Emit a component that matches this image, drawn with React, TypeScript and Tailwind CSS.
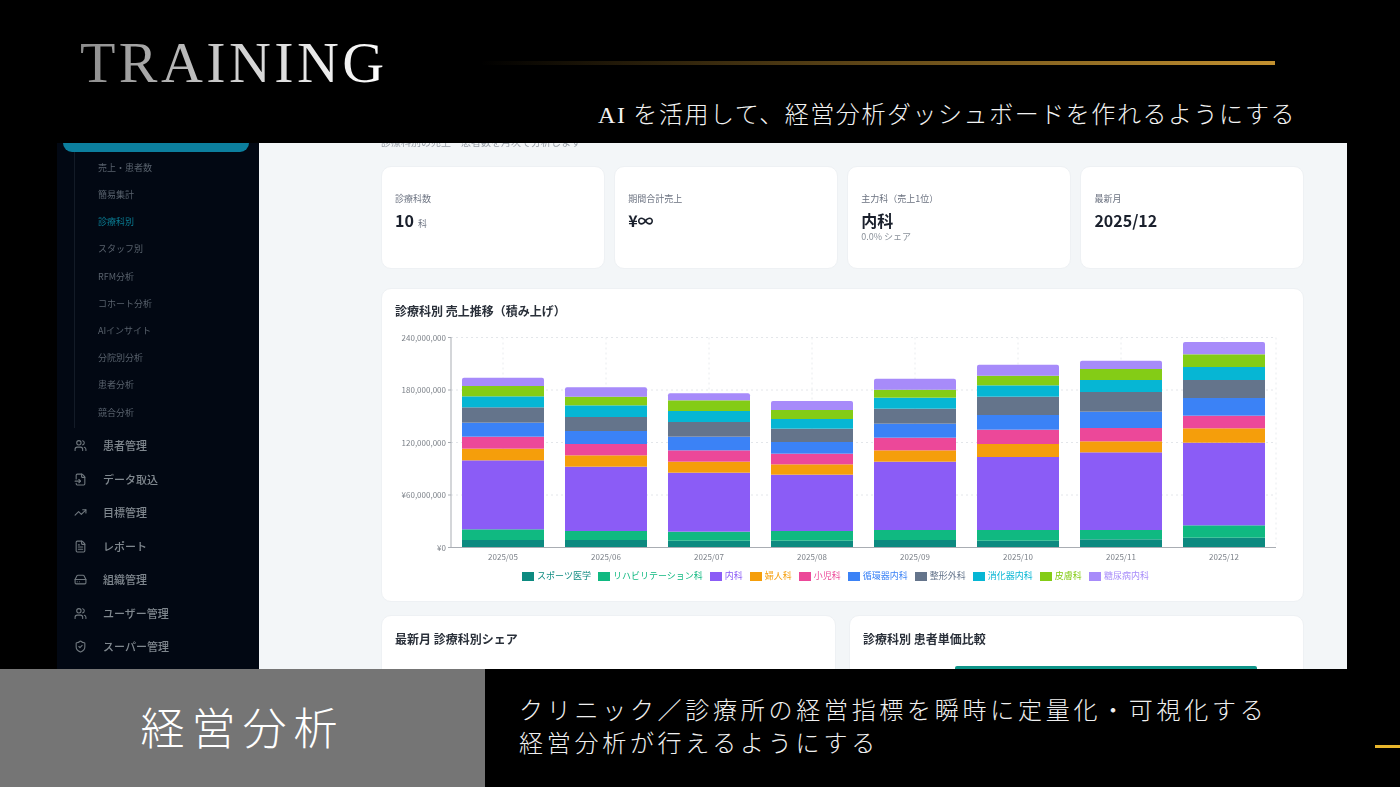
import { FileInput, FileText, HardDrive, ShieldCheck, TrendingUp, Users } from "lucide-react";

const jp = "font-['Noto_Sans_CJK_JP','Noto_Sans',sans-serif]";

const subItems = ["売上・患者数", "簡易集計", "診療科別", "スタッフ別", "RFM分析", "コホート分析", "AIインサイト", "分院別分析", "患者分析", "競合分析"];

const mainItems = [
  { label: "患者管理", icon: Users },
  { label: "データ取込", icon: FileInput },
  { label: "目標管理", icon: TrendingUp },
  { label: "レポート", icon: FileText },
  { label: "組織管理", icon: HardDrive },
  { label: "ユーザー管理", icon: Users },
  { label: "スーパー管理", icon: ShieldCheck },
];

const series = [
  { name: "スポーツ医学", color: "#0d8a80", text: "text-[#0d8a80]" },
  { name: "リハビリテーション科", color: "#10b981", text: "text-[#10b981]" },
  { name: "内科", color: "#8b5cf6", text: "text-[#8b5cf6]" },
  { name: "婦人科", color: "#f59e0b", text: "text-[#f59e0b]" },
  { name: "小児科", color: "#ec4899", text: "text-[#ec4899]" },
  { name: "循環器内科", color: "#3b82f6", text: "text-[#3b82f6]" },
  { name: "整形外科", color: "#64748b", text: "text-[#64748b]" },
  { name: "消化器内科", color: "#06b6d4", text: "text-[#06b6d4]" },
  { name: "皮膚科", color: "#84cc16", text: "text-[#84cc16]" },
  { name: "糖尿病内科", color: "#a78bfa", text: "text-[#a78bfa]" },
];

// segment edges read off the reference, bottom to top, page y
const bars = [
  { month: "2025/05", x: 461, edges: [772, 750, 718, 511, 476, 440, 398, 352, 319, 288, 263] },
  { month: "2025/06", x: 564, edges: [772, 750, 723, 530, 496, 462, 423, 381, 346, 320, 292] },
  { month: "2025/07", x: 667, edges: [772, 752, 725, 548, 515, 481, 440, 396, 363, 331, 310] },
  { month: "2025/08", x: 770, edges: [772, 752, 723, 554, 523, 491, 456, 416, 387, 360, 333] },
  { month: "2025/09", x: 873, edges: [772, 750, 720, 515, 481, 443, 401, 356, 323, 299, 266] },
  { month: "2025/10", x: 976, edges: [772, 752, 720, 501, 462, 419, 375, 320, 286, 257, 224] },
  { month: "2025/11", x: 1079, edges: [772, 748, 720, 487, 454, 414, 365, 306, 270, 237, 212] },
  { month: "2025/12", x: 1182, edges: [772, 743, 706, 458, 415, 377, 324, 270, 231, 193, 156] },
];

const toY = (edge: number) => 290 + edge / 3;

const ticks = [
  { y: 337.5, label: "240,000,000" },
  { y: 390, label: "180,000,000" },
  { y: 442.5, label: "120,000,000" },
  { y: 495, label: "¥60,000,000" },
  { y: 547.5, label: "¥0" },
];

function Sidebar() {
  return (
    <aside className={`w-[202px] shrink-0 bg-[#020813] overflow-hidden ${jp}`}>
      <div className="ml-[6px] w-[186px] h-[9px] rounded-b-[10px] bg-[#0c7f9e]" />
      <div className="ml-[17px] border-l border-[#131b27] pl-[23px] pt-[2px] pb-[2px]">
        {subItems.map((item) => (
          <div key={item} className={`h-[27.2px] flex items-center text-[9px] ${item === "診療科別" ? "text-[#0a7d94]" : "text-[#59626d]"}`}>
            {item}
          </div>
        ))}
      </div>
      <div className="pl-[17px] pt-[1px]">
        {mainItems.map(({ label, icon: Icon }) => (
          <div key={label} className="h-[33.5px] flex items-center gap-[16px] text-[11px] font-medium text-[#80888f]">
            <Icon size={13} strokeWidth={2} className="text-[#70787f]" />
            <span>{label}</span>
          </div>
        ))}
      </div>
    </aside>
  );
}

function StatCard({ label, value, unit, note }: { label: string; value: string; unit?: string; note?: string }) {
  return (
    <div className="h-[103px] rounded-[10px] bg-white border border-[#eef1f4] pl-[13px] pt-[26px]">
      <p className="text-[9px] leading-[12px] text-[#6b7280]">{label}</p>
      <p className="mt-[3px] text-[16px] leading-[24px] font-bold text-[#1a202c]">
        {value}
        {unit && <span className="ml-[4px] text-[9px] font-normal text-[#6b7280]">{unit}</span>}
      </p>
      {note && <p className="text-[9px] leading-[10px] text-[#8b929b]">{note}</p>}
    </div>
  );
}

function StackedChart() {
  return (
    <svg viewBox="381 328 923 236" className="block w-[923px] h-[236px]">
      {ticks.slice(0, 4).map((t) => (
        <line key={t.y} x1={450} x2={1275} y1={t.y} y2={t.y} stroke="#e3e6ea" strokeWidth={1} strokeDasharray="2 3" />
      ))}
      {bars.map((b) => (
        <line key={b.month} x1={b.x + 41} x2={b.x + 41} y1={337.5} y2={547.5} stroke="#e9ecef" strokeWidth={1} strokeDasharray="2 3" />
      ))}
      <line x1={1275} x2={1275} y1={337.5} y2={547.5} stroke="#e9ecef" strokeWidth={1} strokeDasharray="2 3" />
      {bars.map((b) =>
        series.map((s, i) => {
          const bottom = toY(b.edges[i]);
          const top = toY(b.edges[i + 1]);
          if (i === series.length - 1) {
            return (
              <path
                key={s.name}
                d={`M${b.x} ${bottom}V${top + 2}Q${b.x} ${top} ${b.x + 2} ${top}H${b.x + 80}Q${b.x + 82} ${top} ${b.x + 82} ${top + 2}V${bottom}Z`}
                fill={s.color}
              />
            );
          }
          return <rect key={s.name} x={b.x} y={top} width={82} height={bottom - top} fill={s.color} />;
        })
      )}
      <line x1={450} x2={450} y1={337} y2={548} stroke="#a9adb3" strokeWidth={1} />
      <line x1={447} x2={1275} y1={547.5} y2={547.5} stroke="#a9adb3" strokeWidth={1} />
      {ticks.map((t) => (
        <g key={t.label}>
          <line x1={447} x2={450} y1={t.y} y2={t.y} stroke="#a9adb3" strokeWidth={1} />
          <text x={445} y={t.y + 3} textAnchor="end" fontSize={8} fill="#7b8088">
            {t.label}
          </text>
        </g>
      ))}
      {bars.map((b) => (
        <text key={b.month} x={b.x + 41} y={560} textAnchor="middle" fontSize={8} fill="#7b8088">
          {b.month}
        </text>
      ))}
    </svg>
  );
}

function Dashboard() {
  return (
    <main className={`flex-1 bg-[#f3f6f8] overflow-hidden pl-[122px] pr-[43px] ${jp}`}>
      <p className="-mt-[8px] h-[14px] text-[10px] leading-[14px] text-[#9aa1a9]">診療科別の売上・患者数を月次で分析します</p>
      <div className="mt-[17px] grid grid-cols-4 gap-[9.5px]">
        <StatCard label="診療科数" value="10" unit="科" />
        <StatCard label="期間合計売上" value="¥∞" />
        <StatCard label="主力科（売上1位）" value="内科" note="0.0% シェア" />
        <StatCard label="最新月" value="2025/12" />
      </div>
      <section className="mt-[19px] h-[314px] rounded-[10px] bg-white border border-[#eef1f4]">
        <h3 className="pl-[13px] pt-[14px] h-[39px] text-[12px] leading-[16px] font-bold text-[#2a303a]">診療科別 売上推移（積み上げ）</h3>
        <StackedChart />
        <div className="mt-[6px] flex justify-center gap-[7px] pr-[14px]">
          {series.map((s) => (
            <div key={s.name} className={`flex items-center gap-[3px] text-[9px] leading-[12px] ${s.text}`}>
              <svg width="12" height="9" className="shrink-0">
                <rect width="12" height="9" fill={s.color} />
              </svg>
              <span>{s.name}</span>
            </div>
          ))}
        </div>
      </section>
      <div className="mt-[13px] grid grid-cols-2 gap-[13px]">
        <section className="h-[120px] rounded-[10px] bg-white border border-[#eef1f4] pl-[13px] pt-[15px]">
          <h3 className="text-[12px] leading-[16px] font-bold text-[#2a303a]">最新月 診療科別シェア</h3>
        </section>
        <section className="h-[120px] rounded-[10px] bg-white border border-[#eef1f4] pl-[13px] pt-[15px]">
          <h3 className="text-[12px] leading-[16px] font-bold text-[#2a303a]">診療科別 患者単価比較</h3>
          <div className="mt-[19px] ml-[92px] w-[302px] h-[20px] rounded-t-[2px] bg-[#0d9488]" />
        </section>
      </div>
    </main>
  );
}

export default function App() {
  return (
    <div className="w-[1400px] h-[787px] bg-black overflow-hidden flex flex-col">
      <header className="h-[143px] shrink-0">
        <div className="flex items-center pl-[80px] pr-[125px] pt-[34px]">
          <h1 className="w-[400px] shrink-0 font-['Liberation_Serif',serif] text-[58px] leading-[58px] tracking-[3.4px]">
            <span className="bg-gradient-to-r from-[#8c8c8c] via-[#d0d0d0] to-white bg-clip-text text-transparent">TRAINING</span>
          </h1>
          <div className="flex-1 h-[4px] bg-gradient-to-r from-transparent to-[#c39130]" />
        </div>
        <p className={`mt-[5px] pr-[104px] text-right text-[24px] leading-[32px] font-light tracking-[1.55px] text-[#f2f2f2] ${jp}`}>
          <span className="font-['Liberation_Serif',serif]">AI</span> を活用して、経営分析ダッシュボードを作れるようにする
        </p>
      </header>
      <div className="ml-[57px] mr-[53px] h-[526px] shrink-0 overflow-hidden">
        <div className="flex h-full blur-[0.5px]">
          <Sidebar />
          <Dashboard />
        </div>
      </div>
      <footer className={`flex-1 flex ${jp}`}>
        <div className="w-[485px] shrink-0 bg-[#757575] flex items-center justify-center pb-[4px] text-[44px] font-light tracking-[7px] text-white">
          経営分析
        </div>
        <p className="pl-[34px] pt-[23px] text-[24px] leading-[33px] font-light tracking-[3.72px] text-[#f0f0f0]">
          クリニック／診療所の経営指標を瞬時に定量化・可視化する
          <br />
          経営分析が行えるようにする
        </p>
        <div className="ml-auto mt-[76px] w-[25px] h-[3px] bg-[#e8b62c]" />
      </footer>
    </div>
  );
}
